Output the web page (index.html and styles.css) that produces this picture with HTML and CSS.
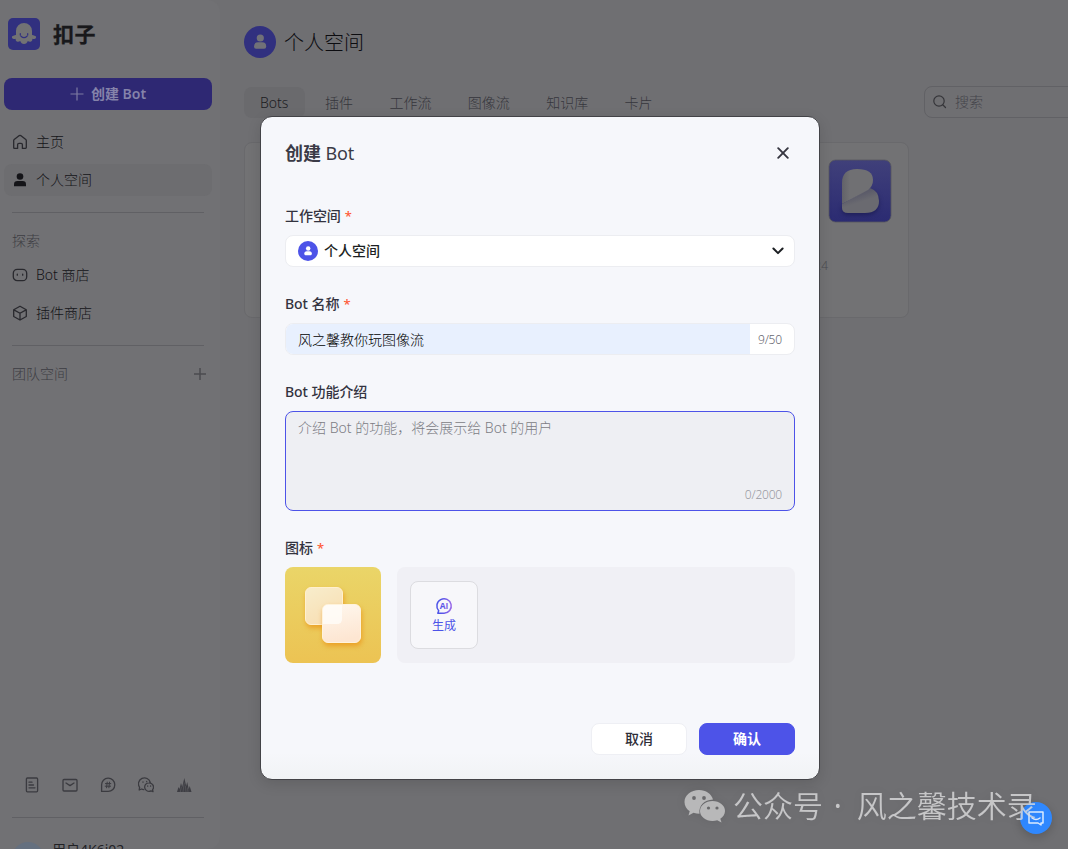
FILE: index.html
```html
<!DOCTYPE html>
<html lang="zh-CN">
<head>
<meta charset="utf-8">
<title>扣子</title>
<link rel="stylesheet" href="styles.css">
</head>
<body>
<div class="app">
  <aside class="sidebar">
    <div class="brand">
      <svg class="brand-logo" width="32" height="32" viewBox="0 0 32 32"><rect width="32" height="32" rx="5" fill="#31307f"/><path d="M8 17V13a8 8 0 0 1 16 0v4c1.500-.3 2 .8 3.300.9 1.200.2 1 2.300-.3 2.800-1 .4-2 .3-2.700.1.400 1.700-.8 3.200-2.300 3-.9-.1-1.600-.4-2.200-.9-.7 1.700-1.900 3-3.800 3s-3.100-1.300-3.800-3c-.6.5-1.300.8-2.200.9-1.500.2-2.700-1.300-2.300-3-.7.2-1.700.3-2.700-.1-1.300-.5-1.500-2.600-.3-2.800C6 17.800 6.500 16.700 8 17z" fill="#727274"/><path d="M12.300 15.500v1.600M19.700 15.500v1.600M13 18.200q3 2.800 6 0" fill="none" stroke="#31307f" stroke-width="1.200" stroke-linecap="round"/></svg>
      <span class="brand-name">扣子</span>
    </div>
    <div class="create"><svg width="14" height="14" viewBox="0 0 14 14" stroke="#7d7aa2" stroke-width="1.200"><path d="M7 .5v13M.5 7h13"/></svg><span>创建 Bot</span></div>
    <nav class="nav">
      <div class="nav-item"><svg class="ico" viewBox="0 0 16 16"><path d="M1.700 6.600Q1.700 6 2.200 5.600L7.300 1.600Q8 1.100 8.700 1.600l5.100 4q.5.400.5 1v7q0 .8-.8.800h-3.100V10.800Q10.400 9.400 9 9.400H7Q5.600 9.400 5.600 10.800v3.600H2.500q-.8 0-.8-.8z"/></svg><span>主页</span></div>
      <div class="nav-item active"><svg class="ico solid" viewBox="0 0 16 16"><circle cx="8" cy="4.500" r="3.300"/><path d="M2 14.300v-2Q2 9 5.500 9h5Q14 9 14 12.300v2z"/></svg><span>个人空间</span></div>
    </nav>
    <div class="rule"></div>
    <div class="section">探索</div>
    <nav class="nav explore">
      <div class="nav-item"><svg class="ico" viewBox="0 0 16 16"><rect x="1.300" y="2.300" width="13.400" height="11.400" rx="4"/><path d="M5.300 7.200v1M10.700 7.200v1"/></svg><span>Bot 商店</span></div>
      <div class="nav-item"><svg class="ico" viewBox="0 0 16 16"><path d="M8 1.200l6.300 3.500v6.800L8 15l-6.300-3.500V4.700zM1.900 4.900L8 8.200l6.100-3.300M8 8.200V15"/></svg><span>插件商店</span></div>
    </nav>
    <div class="rule second"></div>
    <div class="section team"><span>团队空间</span><svg width="12" height="12" viewBox="0 0 12 12" stroke="#4b4b4f" stroke-width="1.500"><path d="M6 0v12M0 6h12"/></svg></div>
    <div class="links">
      <svg class="ico" viewBox="0 0 16 16"><rect x="2.400" y="1" width="11.200" height="13.800" rx="1"/><path d="M5 5.200h3M5 8h4.500M5 10.800h6"/></svg>
      <svg class="ico" viewBox="0 0 16 16"><rect x="1" y="2.500" width="14" height="11.500" rx="1"/><path d="M4 6l4 2.600L12 6"/></svg>
      <svg class="ico" viewBox="0 0 16 16"><path d="M1.600 14.400V8A6.600 6.600 0 1 1 8.200 14.400z"/><path d="M5.400 6.600h5.400M5.200 9.200h5.400M7.200 5.100L6.600 10.800M9.500 5.100L8.900 10.800" stroke-width="1"/></svg>
      <svg class="ico" viewBox="0 0 16 16"><path d="M5.800 12.600Q4.500 12.500 3.600 12L1.200 13l.4-2.600A6 6 0 1 1 12.300 5.500"/><path d="M11 5.800a4.300 4.300 0 1 0 2 8.100l2 .8-.4-2A4.300 4.300 0 0 0 11 5.800z"/><path d="M5 5v.2M8.700 4.500v.2M9.700 9v.2M12.600 9v.2"/></svg>
      <svg class="ico fill" viewBox="0 0 16 16"><path d="M1 15l1.500-5 1 2L5 6l1.200 4L8.300 1l1.900 8 1-4 1.500 7 1-3 1.800 6z"/><path d="M4.300 15l1-5M7 15l1.200-9M10 15L9.400 9M12 15l-.4-4" stroke="#717174" stroke-width=".4"/></svg>
    </div>
    <div class="rule third"></div>
    <div class="user"><span class="user-pic"></span><span>用户4K6i02</span></div>
  </aside>
  <main class="main">
    <header class="head">
      <svg width="32" height="32" viewBox="0 0 32 32"><circle cx="16" cy="16" r="16" fill="#31307f"/><circle cx="16.300" cy="12" r="3.600" fill="#717178"/><path d="M10 20.500q0-4.200 4-4.200h4.200q4 0 4 4.200 0 2.200-2 2.200H12q-2 0-2-2.200z" fill="#717178"/></svg>
      <h1>个人空间</h1>
    </header>
    <div class="toolbar">
      <div class="tabs"><span class="tab on">Bots</span><span class="tab">插件</span><span class="tab">工作流</span><span class="tab">图像流</span><span class="tab">知识库</span><span class="tab">卡片</span></div>
      <div class="search"><svg width="14" height="14" viewBox="0 0 14 14" fill="none" stroke="#353539" stroke-width="1.200"><circle cx="6" cy="6" r="5.200"/><path d="M10 10l2.500 2.500" stroke-linecap="round"/></svg><span>搜索</span></div>
    </div>
    <div class="bot-card">
      <span class="edited">编辑于 09:24</span>
      <svg class="bot-logo" width="64" height="64" viewBox="0 0 64 64">
        <defs><linearGradient id="bg" x2="0" y2="1"><stop stop-color="#40407a"/><stop offset="1" stop-color="#2b2b72"/></linearGradient><linearGradient id="fold" x1="0" y1="0" x2=".5" y2="1"><stop offset=".3" stop-color="#565667"/><stop offset=".65" stop-color="#6a6a70"/></linearGradient><linearGradient id="leaf"><stop stop-color="#626269"/><stop offset=".25" stop-color="#707073"/></linearGradient></defs>
        <rect x="1" y="1" width="62" height="62" rx="6.500" fill="url(#bg)" stroke="#55555e" stroke-width=".8"/>
        <path class="b-shadow" d="M14 45L42 29q9 3 9 13 0 12-14 12H20q-6 0-6-5z" fill="url(#fold)"/><path d="M14 45V24q0-14 15-14 16 0 16 11 0 6-5 10z" fill="url(#leaf)"/>
      </svg>
    </div>
  </main>
</div>

<div class="modal">
  <div class="modal-head"><h2>创建 <span class="latin">Bot</span></h2><svg width="12" height="12" viewBox="0 0 12 12" stroke="#363640" stroke-width="1.900" stroke-linecap="round"><path d="M1.200 1.200l9.600 9.600M10.800 1.200l-9.600 9.600"/></svg></div>
  <div class="field">
    <label>工作空间<i>*</i></label>
    <div class="select"><svg width="20" height="20" viewBox="0 0 32 32"><circle cx="16" cy="16" r="16" fill="#4d53e8"/><circle cx="16.300" cy="12" r="3.600" fill="#fff"/><path d="M10 20.500q0-4.200 4-4.200h4.200q4 0 4 4.200 0 2.200-2 2.200H12q-2 0-2-2.200z" fill="#fff"/></svg><span>个人空间</span><svg class="chevron" width="12" height="8" viewBox="0 0 12 8" fill="none" stroke="#1c1f23" stroke-width="2" stroke-linecap="round" stroke-linejoin="round"><path d="M1.400 1.500L6 6.100l4.600-4.600"/></svg></div>
  </div>
  <div class="field">
    <label>Bot 名称<i>*</i></label>
    <div class="input"><span class="value">风之馨教你玩图像流</span><span class="count">9/50</span></div>
  </div>
  <div class="field">
    <label>Bot 功能介绍</label>
    <div class="textarea"><span>介绍 Bot 的功能，将会展示给 Bot 的用户</span><span class="count">0/2000</span></div>
  </div>
  <div class="field last">
    <label>图标<i>*</i></label>
    <div class="icons">
      <svg width="96" height="96" viewBox="0 0 96 96">
        <defs><linearGradient id="gold" x2="0" y2="1"><stop stop-color="#ead568"/><stop offset="1" stop-color="#ecc353"/></linearGradient><linearGradient id="back" x2=".5" y2="1"><stop stop-color="#f8edcc"/><stop offset="1" stop-color="#f8dfb4"/></linearGradient><linearGradient id="front" x2=".2" y2="1"><stop stop-color="#fff7ee"/><stop offset="1" stop-color="#fde6d2"/></linearGradient></defs>
        <rect width="96" height="96" rx="8" fill="url(#gold)"/>
        <g class="tile"><rect x="20.500" y="20.500" width="37" height="37" rx="5.500" fill="url(#back)" stroke="#fff0cf"/></g>
        <g class="tile"><rect x="37.500" y="37.500" width="38" height="38" rx="5.500" fill="url(#front)" stroke="#fff3dc"/></g>
        <path d="M38 43q0-5 5-5h14v14q0 5-5 5H38z" fill="#fffefb" opacity=".75"/>
      </svg>
      <div class="choices"><div class="generate">
        <svg width="18" height="18" viewBox="0 0 18 18"><defs><linearGradient id="ai" gradientUnits="userSpaceOnUse" x1="0" x2="18"><stop offset=".3" stop-color="#4d53e8"/><stop offset="1" stop-color="#a46be8"/></linearGradient></defs><path d="M3.700 13.800A7.200 7.200 0 1 1 9 16.200H2.800z" fill="none" stroke="url(#ai)" stroke-width="1.500" stroke-linejoin="round"/><text x="4.700" y="12" class="ai" fill="url(#ai)">AI</text></svg>
        <span>生成</span></div></div>
    </div>
  </div>
  <div class="actions"><span class="btn">取消</span><span class="btn primary">确认</span></div>
</div>

<div class="help"><svg width="18" height="16" viewBox="0 0 18 16" fill="none" stroke="#dcebff" stroke-width="1.500" stroke-linejoin="round"><path d="M2 2h14v11h-2V15l-3-2H2z"/><path d="M5 8q4 2.800 8 0" stroke-linecap="round"/></svg></div>
<div class="watermark">
  <svg width="41" height="34" viewBox="0 0 41 34"><path d="M15 1C7 1 .5 6 .5 13c0 4 2 7 5.200 9.200L4.500 26.500l5-2.700q3 .9 6 .9C14.500 17 20 11 29 10.600 27.500 5 22 1 15 1z" fill="#b8b8b9"/><path d="M28.500 12C21.500 12 16 16.500 16 22s5.500 10 12.500 10q2.500 0 4.700-.7l4.300 2.300-1.200-3.800C39 28 41 25.200 41 22c0-5.500-5.500-10-12.500-10z" fill="#b8b8b9"/><g fill="#69696b"><circle cx="10" cy="9" r="1.900"/><circle cx="20" cy="9" r="1.900"/><circle cx="24.500" cy="19" r="1.600"/><circle cx="33" cy="19" r="1.600"/></g></svg>
  <span>公众号 <b class="dot">·</b> 风之馨技术录</span>
</div>
</body>
</html>
```
FILE: styles.css
```css
* { box-sizing: border-box; }
body {
  margin: 0;
  width: 1068px;
  height: 849px;
  overflow: hidden;
  position: relative;
  background: #6f6f72;
  font: 300 14px/20px "Noto Sans", "Noto Sans CJK SC", sans-serif;
  color: #141418;
}
svg { display: block; flex: none; }
.app { display: flex; width: 1068px; height: 849px; overflow: hidden; }
.sidebar {
  width: 220px;
  flex: none;
  height: 849px;
  padding: 18px 8px 0 4px;
  background: #717174;
  border-radius: 0 12px 12px 0;
  display: flex;
  flex-direction: column;
}
.brand { display: flex; align-items: center; gap: 13px; height: 32px; padding-left: 4px; flex: none; }
.brand-name { font-size: 21px; font-weight: 700; letter-spacing: 0.500px; color: #18181b; -webkit-text-stroke: 0.300px #18181b; }
.create {
  height: 32px;
  flex: none;
  margin-top: 28px;
  border-radius: 8px;
  background: #2e2873;
  color: #8583aa;
  display: flex;
  align-items: center;
  justify-content: center;
  gap: 7px;
  font-weight: 600;
}
.nav { margin-top: 16px; display: flex; flex-direction: column; gap: 6px; flex: none; }
.nav-item { height: 32px; padding-left: 8px; display: flex; align-items: center; gap: 8px; border-radius: 8px; }
.nav-item.active { background: #6d6d70; }
.ico { width: 16px; height: 16px; fill: none; stroke: #29292e; stroke-width: 1.300; stroke-linejoin: round; stroke-linecap: round; }
.ico.solid { fill: #141418; stroke: none; }
.ico.fill { fill: #3d3d43; stroke: none; }
.rule { height: 1px; flex: none; margin: 16px 8px 0; background: #606064; }
.section { margin: 18px 5px 0 8px; height: 20px; flex: none; color: #3d3d43; }
.explore { margin-top: 8px; }
.rule.second { margin-top: 16px; }
.team { display: flex; align-items: center; justify-content: space-between; margin-right: 6px; }
.links { margin: auto 0 0 20px; display: flex; gap: 22px; flex: none; }
.links .ico { stroke: #3b3b40; }
.links .ico.fill { stroke: none; }
.rule.third { margin-top: 24px; }
.user { height: 31px; flex: none; padding: 24px 0 0 8px; display: flex; gap: 8px; align-items: flex-start; white-space: nowrap; font-weight: 400; color: #222226; line-height: 16px; }
.user-pic { width: 32px; height: 32px; flex: none; border-radius: 50%; background: #65707f; }
.main { flex: 1; min-width: 0; padding: 26px 0 0 24px; }
.head { display: flex; align-items: center; gap: 8px; height: 32px; }
.head h1 { margin: 0; padding-top: 2px; font-size: 20px; font-weight: 300; line-height: 32px; color: #0c0c10; }
.toolbar { margin-top: 28px; display: flex; justify-content: space-between; width: 860px; height: 32px; }
.tabs { display: flex; gap: 4px; align-items: center; }
.tab { height: 31px; line-height: 31px; padding: 0 16px; border-radius: 8px; color: #36363c; white-space: nowrap; }
.tab + .tab + .tab { margin-left: 0.400px; }
.tab.on { width: 61px; background: #6a6a6d; color: #1c1c22; font-weight: 350; }
.search { width: 180px; height: 32px; border: 1px solid #616165; border-radius: 8px; display: flex; align-items: center; gap: 8px; padding-left: 8px; color: #44444a; }
.bot-card { margin-top: 24px; width: 665px; height: 176px; border: 1px solid #69696c; border-radius: 8px; background: #727274; display: flex; justify-content: flex-end; align-items: flex-start; padding: 16px; }
.edited { margin-top: 99px; font-size: 12px; line-height: 16px; color: #4c4c52; }
.b-shadow { filter: drop-shadow(0 2px 2px rgba(20, 20, 70, 0.600)); }
.modal {
  position: absolute;
  left: 260px;
  top: 116px;
  width: 560px;
  height: 664px;
  border: 1px solid #434347;
  border-radius: 12px;
  padding: 24px;
  background: linear-gradient(#f6f7fb 96%, #f1f3f5);
  box-shadow: 0 4px 14px rgba(0, 0, 0, 0.120);
  display: flex;
  flex-direction: column;
}
.modal-head { height: 24px; display: flex; justify-content: space-between; align-items: center; padding-right: 6px; }
.modal h2 { margin: 0; font-size: 18px; font-weight: 600; line-height: 24px; color: #3b3b47; letter-spacing: -0.100px; }
.latin { font-weight: 450; }
.field { margin-top: 37px; }
.field label { display: block; height: 20px; font-weight: 500; color: #33333f; margin-bottom: 9px; letter-spacing: -0.050px; }
.modal-head + .field { margin-top: 41px; }
.modal-head + .field ~ .field { margin-top: 27px; }
.field label i { font-style: normal; font-size: 13px; color: #ff5a36; margin-left: 4px; }
.select, .input { height: 32px; border: 1px solid #ecedf1; border-radius: 8px; background: #fff; display: flex; align-items: center; }
.select { padding: 0 10px 0 12px; color: #1c1f23; font-weight: 500; }
.select span { margin-left: 6px; }
.chevron { margin-left: auto; }
.input { overflow: hidden; }
.value { flex: 1; height: 32px; line-height: 32px; padding-left: 12px; background: #e8f0fe; color: #000; font-family: "Noto Sans CJK SC", sans-serif; font-weight: 300; }
.count { font-size: 12px; letter-spacing: -0.200px; }
.input .count { width: 44px; padding: 1px 0 0 8px; color: #66666f; }
.textarea { height: 100px; border: 1px solid #4d53e8; border-radius: 8px; background: #eeeff3; padding: 6px 12px 5px; display: flex; flex-direction: column; justify-content: space-between; color: #7c7c84; }
.textarea .count { align-self: flex-end; color: #999aa2; }
.icons { display: flex; gap: 16px; }
.tile { filter: drop-shadow(1px 3px 2.500px rgba(235, 140, 10, 0.650)); }
.choices { flex: 1; background: #f0f0f5; border-radius: 8px; padding: 14px 13px; }
.generate { width: 68px; height: 68px; border: 1px solid #dcdce0; border-radius: 8px; background: #f7f7fa; color: #4d53e8; font-size: 12px; font-weight: 400; line-height: 16px; display: flex; flex-direction: column; align-items: center; padding-top: 15px; gap: 3px; }
.ai { font: 700 8.500px "Open Sans", sans-serif; }
.actions { margin-top: auto; display: flex; justify-content: flex-end; gap: 12px; }
.btn { width: 96px; height: 32px; border: 1px solid #eeeff4; border-radius: 8px; background: #fff; color: #2e2e38; font-weight: 500; text-align: center; line-height: 30px; }
.primary { background: #4d53e8; border-color: #4d53e8; color: #fff; font-weight: 700; }
.help { position: absolute; left: 1020px; top: 802px; width: 32px; height: 32px; border-radius: 50%; background: #2f88ff; display: flex; align-items: center; justify-content: center; box-shadow: 0 3px 10px rgba(0, 0, 0, 0.180); }
.watermark { position: absolute; left: 684px; top: 789px; display: flex; align-items: center; gap: 8px; color: rgba(220, 220, 221, 0.800); font-size: 30px; line-height: 34px; font-weight: 350; white-space: nowrap; filter: drop-shadow(0 0 4px rgba(0, 0, 0, 0.080)); }
.dot { font-weight: 400; margin: 0 7px 0 3px; }
```
